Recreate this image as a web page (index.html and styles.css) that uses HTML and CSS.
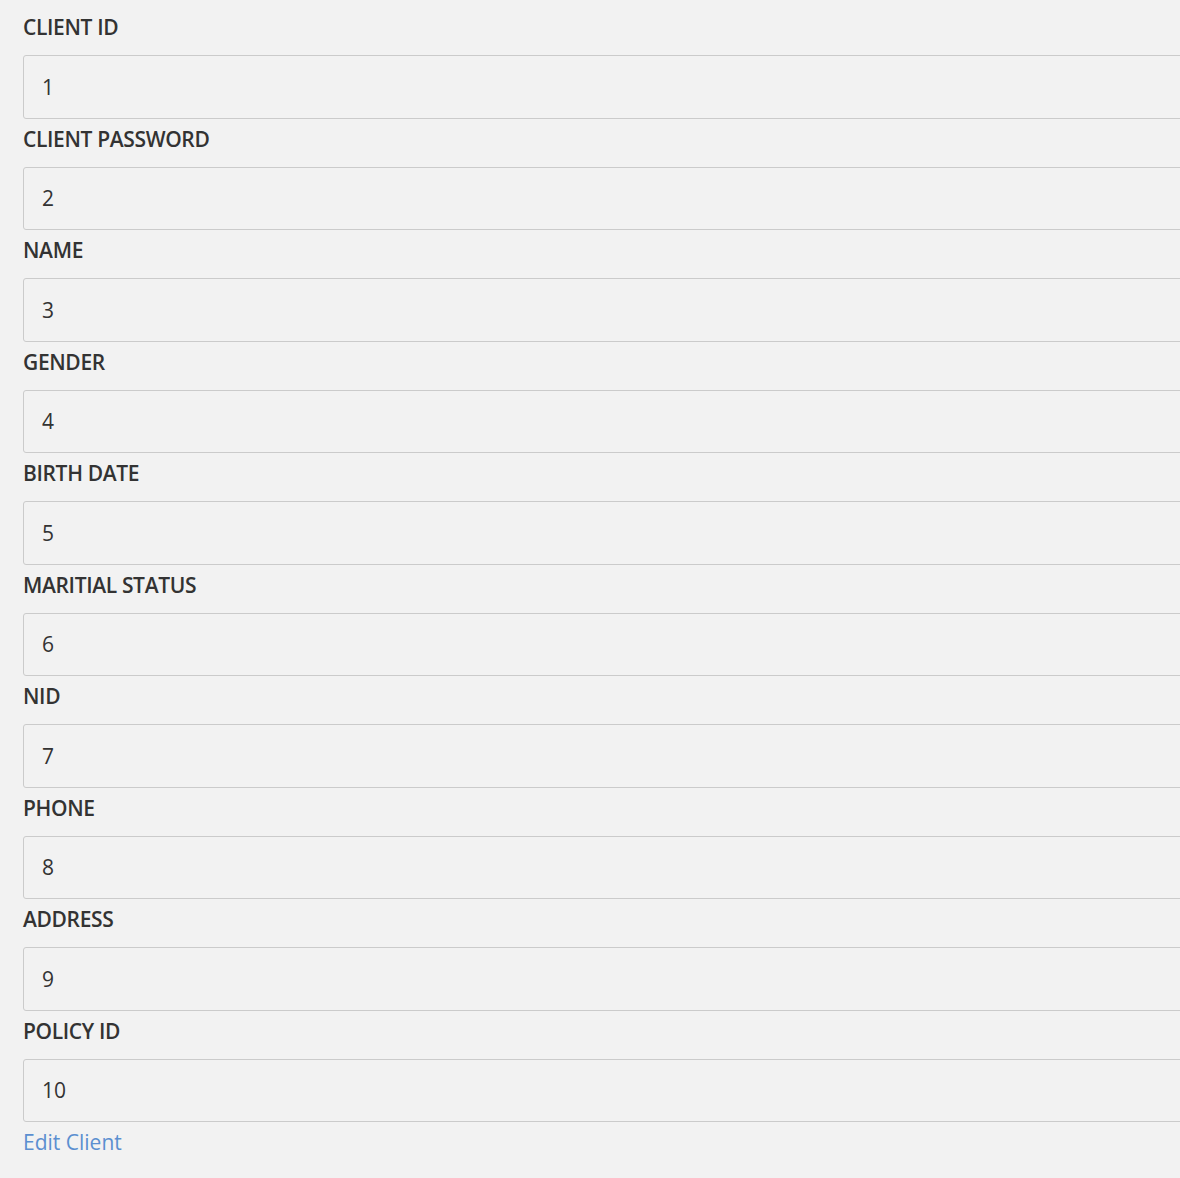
FILE: index.html
```html
<!DOCTYPE html>
<html>
<head>
<meta charset="utf-8">
<link rel="stylesheet" href="styles.css">
</head>
<body>
<form class="form">
  <div class="field"><label class="label">CLIENT ID</label><input class="input" type="text" value="1"></div>
  <div class="field"><label class="label">CLIENT PASSWORD</label><input class="input" type="text" value="2"></div>
  <div class="field"><label class="label">NAME</label><input class="input" type="text" value="3"></div>
  <div class="field"><label class="label">GENDER</label><input class="input" type="text" value="4"></div>
  <div class="field"><label class="label">BIRTH DATE</label><input class="input" type="text" value="5"></div>
  <div class="field"><label class="label">MARITIAL STATUS</label><input class="input" type="text" value="6"></div>
  <div class="field"><label class="label">NID</label><input class="input" type="text" value="7"></div>
  <div class="field"><label class="label">PHONE</label><input class="input" type="text" value="8"></div>
  <div class="field"><label class="label">ADDRESS</label><input class="input" type="text" value="9"></div>
  <div class="field"><label class="label">POLICY ID</label><input class="input" type="text" value="10"></div>
  <a class="link" href="#">Edit Client</a>
</form>
</body>
</html>
```
FILE: styles.css
```css
html, body {
  margin: 0;
  padding: 0;
  background: #f2f2f2;
}
body {
  font-family: "Open Sans", "Liberation Sans", sans-serif;
  color: #333;
  overflow: hidden;
}
.form {
  display: flex;
  flex-direction: column;
  gap: 4px;
  padding: 11px 0 0 23px;
  overflow: hidden;
}
.field {
  display: flex;
  flex-direction: column;
}
.label {
  font-size: 21px;
  font-weight: 600;
  line-height: 32px;
  margin-bottom: 12px;
  color: #333;
  letter-spacing: -0.35px;
}
.input {
  box-sizing: border-box;
  width: calc(100% + 20px);
  height: 63.5px;
  margin: 0;
  padding: 0 18px;
  border: 1px solid #cbcbcb;
  border-radius: 3px;
  background: #f2f2f2;
  font-family: "Open Sans", "Liberation Sans", sans-serif;
  font-size: 21px;
  color: #333;
  outline: none;
}
.link {
  font-size: 21px;
  line-height: 32px;
  color: #5b8fd0;
  text-decoration: none;
  align-self: flex-start;
  margin-top: 0;
}
```
